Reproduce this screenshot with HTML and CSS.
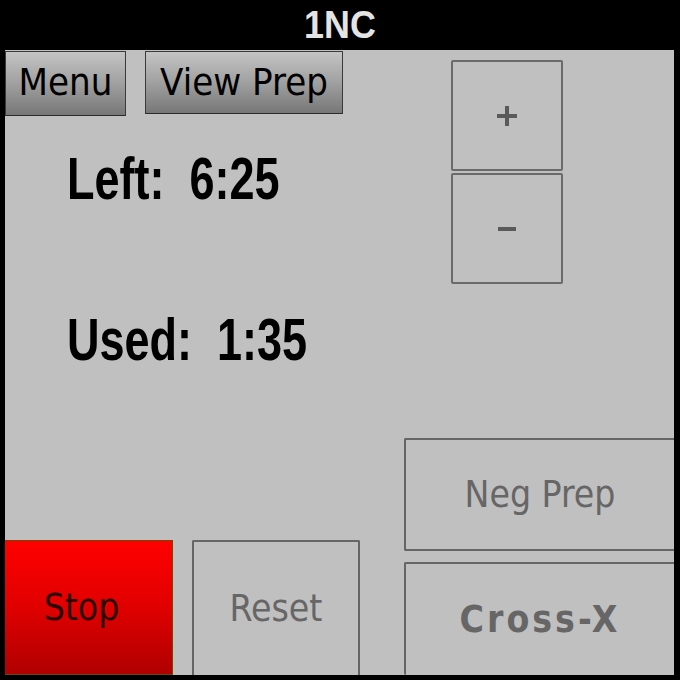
FILE: index.html
```html
<!DOCTYPE html>
<html>
<head>
    <title>1NC</title>
    <meta charset="UTF-8">
    <link rel="stylesheet" href="styles.css">
</head>
<body>
    <div class="screen">
        <div class="title-bar"><span class="title-text">1NC</span></div>
        <div class="panel">
            <div class="top-area">
                <div class="main-col">
                    <div class="toolbar">
                        <div class="tool-btn menu-btn">Menu</div>
                        <div class="tool-btn prep-btn">View Prep</div>
                    </div>
                    <div class="clock left-clock"><span class="clock-text">Left:  6:25</span></div>
                    <div class="clock used-clock"><span class="clock-text">Used:  1:35</span></div>
                </div>
                <div class="adjust">
                    <div class="adjust-btn">
                        <svg width="24" height="24" viewBox="0 0 24 24">
                            <path d="M12 2 V22 M2 12 H22" stroke="#5a5a5a" stroke-width="4"/>
                        </svg>
                    </div>
                    <div class="adjust-btn">
                        <svg width="20" height="6" viewBox="0 0 20 6">
                            <path d="M1 3 H19" stroke="#5a5a5a" stroke-width="4"/>
                        </svg>
                    </div>
                </div>
            </div>
            <div class="bottom-area">
                <div class="big-btn stop-btn">Stop</div>
                <div class="big-btn reset-btn">Reset</div>
                <div class="speech-col">
                    <div class="big-btn speech-btn">Neg Prep</div>
                    <div class="big-btn speech-btn cross-btn">Cross-X</div>
                </div>
            </div>
        </div>
    </div>
</body>
</html>
```

FILE: styles.css
```css
body {
    margin: 0;
    background-color: #000;
    font-family: "DejaVu Sans", sans-serif;
    font-stretch: condensed;
}
.screen {
    width: 680px;
    height: 680px;
    display: flex;
    flex-direction: column;
    background-color: #000;
}
.title-bar {
    height: 50px;
    line-height: 50px;
    text-align: center;
    color: #e4e4e4;
    font-family: "Liberation Sans", sans-serif;
    font-weight: bold;
    font-size: 39px;
}
.title-text {
    display: inline-block;
    transform: scaleX(0.92);
}
.panel {
    margin: 0 6px 5px 5px;
    flex: 1;
    background-color: #c0c0c0;
    display: flex;
    flex-direction: column;
}
.top-area {
    height: 388px;
    display: flex;
}
.main-col {
    width: 446px;
}
.toolbar {
    display: flex;
    gap: 19px;
    margin-top: 1px;
}
.tool-btn {
    height: 63px;
    box-sizing: border-box;
    border: 1px solid #3a3a3a;
    border-bottom-color: #2a2a2a;
    background: linear-gradient(#c4c4c4, #a0a0a0 50%, #777);
    color: #000;
    font-size: 38px;
    line-height: 60px;
    text-align: center;
}
.menu-btn {
    width: 121px;
    height: 65px;
}
.prep-btn {
    width: 198px;
}
.clock {
    font-family: "Liberation Sans", sans-serif;
    font-weight: bold;
    font-size: 60px;
    line-height: 60px;
    white-space: pre;
    color: #000;
    padding-left: 62px;
}
.clock-text {
    display: inline-block;
    transform: scaleX(0.75);
    transform-origin: left center;
}
.left-clock {
    margin-top: 33px;
}
.used-clock {
    margin-top: 101px;
}
.adjust {
    margin-top: 10px;
    width: 112px;
    display: flex;
    flex-direction: column;
    gap: 2px;
}
.adjust-btn {
    height: 111px;
    box-sizing: border-box;
    border: 2px solid #6a6a6a;
    border-radius: 2px;
    display: flex;
    align-items: center;
    justify-content: center;
}
.bottom-area {
    flex: 1;
    display: flex;
    align-items: flex-end;
}
.big-btn {
    box-sizing: border-box;
    display: flex;
    align-items: center;
    justify-content: center;
    font-size: 37px;
}
.stop-btn {
    width: 168px;
    height: 135px;
    padding-right: 14px;
    border: 1px solid #6b4a00;
    border-left: none;
    background: linear-gradient(#ff0000, #e00000 50%, #b00000);
    color: #2a0000;
}
.reset-btn {
    width: 168px;
    height: 135px;
    margin-left: 19px;
    border: 2px solid #666;
    border-bottom: none;
    border-radius: 2px 2px 0 0;
    color: #666;
}
.speech-col {
    margin-left: 44px;
    width: 270px;
    display: flex;
    flex-direction: column;
    gap: 11px;
}
.speech-btn {
    height: 113px;
    border: 2px solid #666;
    border-right: none;
    border-radius: 2px 0 0 2px;
    color: #666;
}
.cross-btn {
    font-weight: bold;
    letter-spacing: 3px;
    border-bottom: none;
}
```
